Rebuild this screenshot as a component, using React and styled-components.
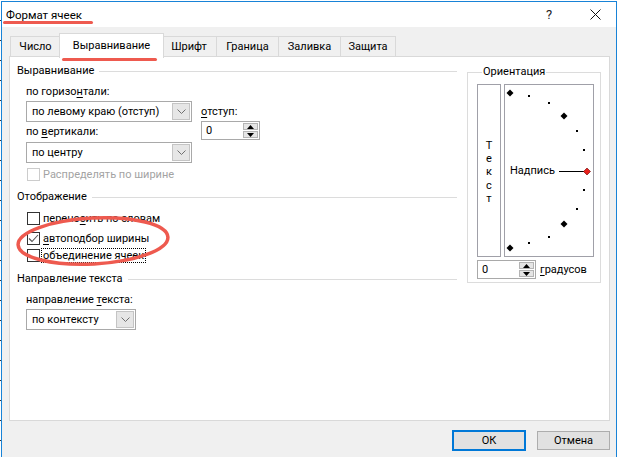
import React from 'react'
import styled, { createGlobalStyle } from 'styled-components'

const GlobalStyle = createGlobalStyle`
  html, body { margin: 0; padding: 0; background: #fff; }
  body {
    font-family: Roboto, "Noto Sans", sans-serif;
    font-size: 11px;
    color: #000;
  }
  * { box-sizing: border-box; }
`

const RED = '#ee5a4f'

const Screen = styled.div`
  display: flex;
  height: 457px;
  overflow: hidden;
  padding-top: 1px;
  background: #fff;
`

const SheetEdge = styled.div`
  width: 1px;
  flex: none;
  background: repeating-linear-gradient(to bottom, #fff 0 19px, #333 19px 20px);
`

const Window = styled.div`
  width: 616px;
  height: 470px;
  flex: none;
  border: 1px solid #1883d7;
  display: flex;
  flex-direction: column;
`

const TitleBar = styled.div`
  position: relative;
  height: 25px;
  flex: none;
  background: #fff;
  display: flex;
  align-items: center;
  padding-left: 4px;
`

const Title = styled.span`
  flex: 1;
  font-size: 11.5px;
`

const TitleMark = styled.div`
  position: absolute;
  left: 1px;
  top: 19px;
  width: 90px;
  height: 3px;
  border-radius: 2px;
  background: ${RED};
`

const CaptionButton = styled.div`
  width: ${p => p.$w}px;
  height: 25px;
  display: flex;
  align-items: center;
  justify-content: center;
  margin-left: ${p => p.$gap || 0}px;
  font-size: 13px;
  color: #222;
`

const Body = styled.div`
  flex: 1;
  background: #f0f0f0;
  padding: 6px 6px 0 7px;
`

const Tabs = styled.div`
  display: flex;
  align-items: flex-end;
  height: 24px;
  padding-left: 1px;
  position: relative;
  z-index: 1;
`

const Tab = styled.div`
  position: relative;
  width: ${p => p.$w}px;
  height: ${p => (p.$active ? 25 : 21)}px;
  margin: ${p => (p.$active ? '0 -2px -1px' : '0')};
  z-index: ${p => (p.$active ? 2 : 0)};
  background: ${p => (p.$active ? '#fff' : '#f0f0f0')};
  border: 1px solid #d9d9d9;
  border-bottom: ${p => (p.$active ? 'none' : '1px solid #d9d9d9')};
  border-left: ${p => (p.$first || p.$active ? '1px solid #d9d9d9' : 'none')};
  display: flex;
  align-items: center;
  justify-content: center;
  padding-bottom: ${p => (p.$active ? 2 : 0)}px;
`

const TabMark = styled.div`
  position: absolute;
  left: 2px;
  top: 24px;
  width: 95px;
  height: 3px;
  border-radius: 2px;
  background: ${RED};
`

const Panel = styled.div`
  height: 365px;
  margin-top: -1px;
  background: #fff;
  border: 1px solid #d9d9d9;
  display: flex;
  gap: 10px;
  padding: 7px 0 0 7px;
`

const LeftColumn = styled.div`
  width: 440px;
  display: flex;
  flex-direction: column;
`

const GroupHeading = styled.div`
  display: flex;
  align-items: center;
  gap: 5px;
  height: 14px;
  line-height: 14px;
  margin-top: ${p => p.$mt || 0}px;
  &::after {
    content: '';
    flex: 1;
    height: 1px;
    background: #dcdcdc;
  }
`

const Indent = styled.div`
  padding-left: 9px;
  margin-top: ${p => p.$mt || 0}px;
  display: flex;
  flex-direction: ${p => (p.$row ? 'row' : 'column')};
  position: relative;
`

const FieldColumn = styled.div`
  display: flex;
  flex-direction: column;
  padding-top: ${p => p.$pt || 0}px;
  margin-left: ${p => p.$ml || 0}px;
`

const Label = styled.div`
  height: 14px;
  line-height: 14px;
  margin-top: ${p => p.$mt || 0}px;
  white-space: nowrap;
  u { text-decoration: underline; text-underline-offset: 2px; }
`

const SelectBox = styled.div`
  width: ${p => p.$w}px;
  height: 21px;
  margin-top: ${p => p.$mt || 0}px;
  border: 1px solid #a9a9a9;
  background: #fff;
  display: flex;
  align-items: center;
  padding: 1px;
`

const SelectValue = styled.div`
  flex: 1;
  padding-left: 4px;
  white-space: nowrap;
  overflow: hidden;
`

const SelectArrow = styled.div`
  width: 18px;
  height: 17px;
  flex: none;
  background: #e6e6e6;
  border: 1px solid #c4c4c4;
  display: flex;
  align-items: center;
  justify-content: center;
`

const SpinBox = styled.div`
  width: ${p => p.$w}px;
  height: 19px;
  margin-top: ${p => p.$mt || 0}px;
  border: 1px solid #a9a9a9;
  background: #fff;
  display: flex;
  padding: 1px;
`

const SpinValue = styled.div`
  flex: 1;
  padding-left: 3px;
  line-height: 15px;
`

const SpinButtons = styled.div`
  width: 15px;
  display: flex;
  flex-direction: column;
  gap: 1px;
`

const SpinButton = styled.div`
  flex: 1;
  background: #e5e5e5;
  border: 1px solid #b4b4b4;
  display: flex;
  align-items: center;
  justify-content: center;
`

const CheckRow = styled.div`
  display: flex;
  align-items: center;
  height: 14px;
  gap: 3px;
  padding-left: 1px;
  margin-top: ${p => p.$mt || 0}px;
  color: ${p => (p.$disabled ? '#a3a3a3' : '#000')};
  white-space: nowrap;
  u { text-decoration: underline; text-underline-offset: 2px; }
`

const Box = styled.div`
  width: 13px;
  height: 13px;
  flex: none;
  border: 1px solid ${p => (p.$disabled ? '#cccccc' : '#333')};
  background: #fff;
  display: flex;
  align-items: center;
  justify-content: center;
`

const FocusText = styled.span`
  outline: 1px dotted #000;
  outline-offset: 0px;
  padding: 0 1px;
  margin-left: -1px;
`

const Ellipse = styled.svg`
  position: absolute;
  left: -2px;
  top: 11px;
  overflow: visible;
  pointer-events: none;
`

const OrientGroup = styled.fieldset`
  margin: 1px 0 0;
  width: 134px;
  height: 218px;
  border: 1px solid #dcdcdc;
  padding: 5px 6px 0 9px;
  display: flex;
  flex-direction: column;
`

const Legend = styled.legend`
  padding: 0 1px;
  margin-left: 5px;
  line-height: 14px;
`

const Boxes = styled.div`
  display: flex;
  gap: 3px;
`

const VerticalText = styled.div`
  width: 24px;
  height: 173px;
  border: 1px solid #a0a0a8;
  display: flex;
  flex-direction: column;
  align-items: center;
  justify-content: center;
  padding-top: 3px;
`

const Letter = styled.span`
  display: block;
  height: 13.4px;
  line-height: 13.4px;
`

const Dial = styled.div`
  position: relative;
  width: 90px;
  height: 173px;
  border: 1px solid #a0a0a8;
`

const DialLabel = styled.span`
  position: absolute;
  left: 5px;
  top: 79px;
  line-height: 14px;
`

const DegreeRow = styled.div`
  display: flex;
  align-items: center;
  gap: 4px;
  margin-top: 3px;
`

const Footer = styled.div`
  display: flex;
  justify-content: flex-end;
  align-items: center;
  gap: 11px;
  height: 30px;
  padding-top: 9px;
`

const Button = styled.div`
  width: ${p => p.$w}px;
  height: ${p => (p.$default ? 21 : 19)}px;
  background: #e1e1e1;
  border: ${p => (p.$default ? '2px solid #0078d7' : '1px solid #adadad')};
  display: flex;
  align-items: center;
  justify-content: center;
`

const Chevron = () => (
  <svg width="9" height="5" viewBox="0 0 9 5">
    <polyline points="0.5,0.5 4.5,4.5 8.5,0.5" fill="none" stroke="#707070" strokeWidth="1" />
  </svg>
)

const Select = ({ width, value, mt }) => (
  <SelectBox $w={width} $mt={mt}>
    <SelectValue>{value}</SelectValue>
    <SelectArrow>
      <Chevron />
    </SelectArrow>
  </SelectBox>
)

const Spinner = ({ width, mt }) => (
  <SpinBox $w={width} $mt={mt}>
    <SpinValue>0</SpinValue>
    <SpinButtons>
      <SpinButton>
        <svg width="7" height="4" viewBox="0 0 7 4"><polygon points="0,4 7,4 3.5,0" fill="#000" /></svg>
      </SpinButton>
      <SpinButton>
        <svg width="7" height="4" viewBox="0 0 7 4"><polygon points="0,0 7,0 3.5,4" fill="#000" /></svg>
      </SpinButton>
    </SpinButtons>
  </SpinBox>
)

const Check = ({ checked, disabled, children, mt }) => (
  <CheckRow $mt={mt} $disabled={disabled}>
    <Box $disabled={disabled}>
      {checked && (
        <svg width="11" height="9" viewBox="0 0 11 9">
          <polyline points="1,4.5 4,7.5 10,1" fill="none" stroke="#555" strokeWidth="1.1" />
        </svg>
      )}
    </Box>
    <span>{children}</span>
  </CheckRow>
)

const big = [[5, 8], [59, 31], [59, 139], [5, 163]]
const small = [[24, 11], [44, 18], [72, 46], [79, 65], [79, 105], [72, 124], [44, 152], [24, 158]]

const diamond = (x, y, r) => `${x},${y - r} ${x + r},${y} ${x},${y + r} ${x - r},${y}`

const tabs = [
  { name: 'Число', w: 51 },
  { name: 'Выравнивание', w: 105, active: true },
  { name: 'Шрифт', w: 55 },
  { name: 'Граница', w: 62 },
  { name: 'Заливка', w: 62 },
  { name: 'Защита', w: 55 }
]

export default function App() {
  return (
    <>
      <GlobalStyle />
      <Screen>
        <SheetEdge />
        <Window>
          <TitleBar>
            <Title>Формат ячеек</Title>
            <TitleMark />
            <CaptionButton $w={30}>?</CaptionButton>
            <CaptionButton $w={42} $gap={10}>
              <svg width="11" height="11" viewBox="0 0 11 11">
                <path d="M0.5 0.5 L10.5 10.5 M10.5 0.5 L0.5 10.5" stroke="#111" strokeWidth="1" />
              </svg>
            </CaptionButton>
          </TitleBar>
          <Body>
            <Tabs>
              {tabs.map((t, i) => (
                <Tab key={t.name} $w={t.w} $active={t.active} $first={i === 0}>
                  {t.name}
                  {t.active && <TabMark />}
                </Tab>
              ))}
            </Tabs>
            <Panel>
              <LeftColumn>
                <GroupHeading>Выравнивание</GroupHeading>
                <Indent $mt={7} $row>
                  <FieldColumn>
                    <Label>по горизо<u>н</u>тали:</Label>
                    <Select width={166} value="по левому краю (отступ)" mt={2} />
                    <Label $mt={3}>по <u>в</u>ертикали:</Label>
                    <Select width={166} value="по центру" mt={3} />
                  </FieldColumn>
                  <FieldColumn $pt={20} $ml={9}>
                    <Label><u>о</u>тступ:</Label>
                    <Spinner width={59} mt={2} />
                  </FieldColumn>
                </Indent>
                <Indent $mt={4}>
                  <Check disabled>Распределять по ширине</Check>
                </Indent>
                <GroupHeading $mt={9}>Отображение</GroupHeading>
                <Indent>
                  <Check mt={7}>перено<u>с</u>ить по словам</Check>
                  <Check mt={6} checked><u>а</u>втоподбор ширины</Check>
                  <Check mt={3}>
                    <FocusText><u>о</u>бъединение ячеек</FocusText>
                  </Check>
                  <Ellipse width="156" height="52" viewBox="0 0 156 52">
                    <ellipse
                      cx="78"
                      cy="26"
                      rx="75"
                      ry="23"
                      fill="none"
                      stroke={RED}
                      strokeWidth="3.5"
                      transform="rotate(-3 78 26)"
                    />
                  </Ellipse>
                </Indent>
                <GroupHeading $mt={10}>Направление текста</GroupHeading>
                <Indent $mt={7}>
                  <Label>направление <u>т</u>екста:</Label>
                  <Select width={110} value="по контексту" mt={2} />
                </Indent>
              </LeftColumn>
              <OrientGroup>
                <Legend>Ориентация</Legend>
                <Boxes>
                  <VerticalText>
                    {['Т', 'е', 'к', 'с', 'т'].map((c, i) => (
                      <Letter key={i}>{c}</Letter>
                    ))}
                  </VerticalText>
                  <Dial>
                    <svg width="88" height="171" viewBox="0 0 88 171">
                      {big.map(([x, y]) => (
                        <polygon key={`b${x}${y}`} points={diamond(x, y, 3.5)} fill="#000" />
                      ))}
                      {small.map(([x, y]) => (
                        <rect key={`s${x}${y}`} x={x - 1} y={y - 1} width="2" height="2" fill="#000" />
                      ))}
                      <line x1="54" y1="86.5" x2="80" y2="86.5" stroke="#000" strokeWidth="1" />
                      <polygon points={diamond(82, 86.5, 3.5)} fill="#e8201c" stroke="#600" strokeWidth="0.6" />
                    </svg>
                    <DialLabel>Надпись</DialLabel>
                  </Dial>
                </Boxes>
                <DegreeRow>
                  <Spinner width={59} />
                  <Label><u>г</u>радусов</Label>
                </DegreeRow>
              </OrientGroup>
            </Panel>
            <Footer>
              <Button $w={74} $default>ОК</Button>
              <Button $w={73}>Отмена</Button>
            </Footer>
          </Body>
        </Window>
      </Screen>
    </>
  )
}
